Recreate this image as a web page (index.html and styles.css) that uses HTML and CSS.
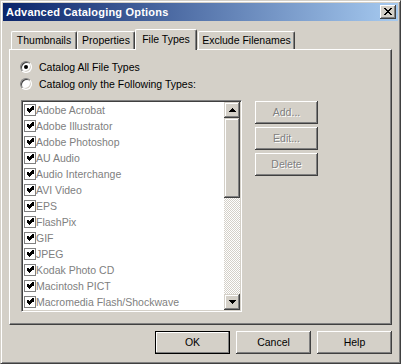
FILE: index.html
```html
<!DOCTYPE html>
<html>
<head>
<meta charset="utf-8">
<title>Advanced Cataloging Options</title>
<link rel="stylesheet" href="styles.css">
</head>
<body>
<div class="window">
  <div class="titlebar">
    <span class="title">Advanced Cataloging Options</span>
    <div class="close">
      <svg width="8" height="7" viewBox="0 0 8 7" shape-rendering="crispEdges">
        <rect x="0" y="0" width="2" height="1"/><rect x="6" y="0" width="2" height="1"/>
        <rect x="1" y="1" width="2" height="1"/><rect x="5" y="1" width="2" height="1"/>
        <rect x="2" y="2" width="4" height="1"/>
        <rect x="3" y="3" width="2" height="1"/>
        <rect x="2" y="4" width="4" height="1"/>
        <rect x="1" y="5" width="2" height="1"/><rect x="5" y="5" width="2" height="1"/>
        <rect x="0" y="6" width="2" height="1"/><rect x="6" y="6" width="2" height="1"/>
      </svg>
    </div>
  </div>
  <div class="body">
    <div class="tabs">
      <div class="tab tab-thumbs">Thumbnails</div>
      <div class="tab tab-props">Properties</div>
      <div class="tab tab-types selected">File Types</div>
      <div class="tab tab-exclude">Exclude Filenames</div>
    </div>
    <div class="panel">
      <div class="radio-row"><span class="radio checked"></span><span class="radio-label">Catalog All File Types</span></div>
      <div class="radio-row"><span class="radio"></span><span class="radio-label">Catalog only the Following Types:</span></div>
      <div class="list-area">
        <div class="listbox">
          <ul class="items">
            <li class="item"><span class="check"></span>Adobe Acrobat</li>
            <li class="item"><span class="check"></span>Adobe Illustrator</li>
            <li class="item"><span class="check"></span>Adobe Photoshop</li>
            <li class="item"><span class="check"></span>AU Audio</li>
            <li class="item"><span class="check"></span>Audio Interchange</li>
            <li class="item"><span class="check"></span>AVI Video</li>
            <li class="item"><span class="check"></span>EPS</li>
            <li class="item"><span class="check"></span>FlashPix</li>
            <li class="item"><span class="check"></span>GIF</li>
            <li class="item"><span class="check"></span>JPEG</li>
            <li class="item"><span class="check"></span>Kodak Photo CD</li>
            <li class="item"><span class="check"></span>Macintosh PICT</li>
            <li class="item"><span class="check"></span>Macromedia Flash/Shockwave</li>
          </ul>
          <div class="scrollbar">
            <div class="sb-btn">
              <svg width="7" height="4" viewBox="0 0 7 4" shape-rendering="crispEdges">
                <rect x="3" y="0" width="1" height="1"/><rect x="2" y="1" width="3" height="1"/>
                <rect x="1" y="2" width="5" height="1"/><rect x="0" y="3" width="7" height="1"/>
              </svg>
            </div>
            <div class="sb-thumb"></div>
            <div class="sb-track"></div>
            <div class="sb-btn">
              <svg width="7" height="4" viewBox="0 0 7 4" shape-rendering="crispEdges">
                <rect x="0" y="0" width="7" height="1"/><rect x="1" y="1" width="5" height="1"/>
                <rect x="2" y="2" width="3" height="1"/><rect x="3" y="3" width="1" height="1"/>
              </svg>
            </div>
          </div>
        </div>
        <div class="side-buttons">
          <div class="btn btn-side disabled">Add...</div>
          <div class="btn btn-side disabled">Edit...</div>
          <div class="btn btn-side disabled">Delete</div>
        </div>
      </div>
    </div>
    <div class="footer">
      <div class="btn btn-main default">OK</div>
      <div class="btn btn-main">Cancel</div>
      <div class="btn btn-main">Help</div>
    </div>
  </div>
</div>
</body>
</html>
```

FILE: styles.css
```css
html, body {
  margin: 0;
  padding: 0;
  background: #d4d0c8;
}
body {
  font-family: "Liberation Sans", Arial, sans-serif;
  font-size: 10.5px;
  color: #000;
}
.window {
  width: 401px;
  height: 364px;
  box-sizing: border-box;
  border: 1px solid;
  border-color: #d4d0c8 #404040 #404040 #d4d0c8;
  box-shadow: inset 1px 1px #fff, inset -1px -1px #808080;
  padding: 2px;
  background: #d4d0c8;
  display: flex;
  flex-direction: column;
}
.titlebar {
  height: 18px;
  flex: none;
  background: linear-gradient(to right, #0a246a, #a6caf0);
  display: flex;
  align-items: center;
  padding: 0 2px 0 3px;
}
.title {
  color: #fff;
  font-weight: bold;
  font-size: 11px;
  letter-spacing: 0.2px;
}
.close {
  margin-left: auto;
  width: 16px;
  height: 14px;
  box-sizing: border-box;
  background: #d4d0c8;
  box-shadow: inset -1px -1px #404040, inset 1px 1px #fff, inset -2px -2px #808080;
  display: flex;
  align-items: center;
  justify-content: center;
  padding: 0 1px 1px 0;
}
.close svg, .sb-btn svg { fill: #000; display: block; }
.body {
  flex: 1;
  padding: 8px 6px 0 6px;
  display: flex;
  flex-direction: column;
}
.tabs {
  display: flex;
  align-items: flex-end;
  height: 20px;
  padding-left: 2px;
  flex: none;
}
.tab {
  height: 18px;
  box-sizing: border-box;
  border-top: 1px solid #fff;
  border-left: 1px solid #fff;
  border-right: 1px solid #404040;
  box-shadow: inset -1px 0 #808080;
  border-radius: 2px 2px 0 0;
  display: flex;
  align-items: center;
  justify-content: center;
  padding-bottom: 1px;
  white-space: nowrap;
}
.tab.selected {
  height: 21px;
  margin-bottom: -1px;
  position: relative;
  z-index: 1;
  background: #d4d0c8;
  padding-bottom: 3px;
}
.tab-thumbs { width: 66px; }
.tab-props { width: 58px; }
.tab-types { width: 62px; }
.tab-exclude { width: 97px; margin-left: 1px; }
.panel {
  height: 276px;
  flex: none;
  box-sizing: border-box;
  border-top: 1px solid #fff;
  border-left: 1px solid #fff;
  border-right: 1px solid #404040;
  border-bottom: 1px solid #404040;
  box-shadow: inset -1px -1px #808080;
  padding: 8px 0 0 10px;
}
.radio-row {
  height: 17px;
  display: flex;
  align-items: center;
}
.radio {
  width: 12px;
  height: 12px;
  box-sizing: border-box;
  border-radius: 50%;
  background: #fff;
  border: 1px solid;
  border-color: #808080 #fff #fff #808080;
  box-shadow: inset 1px 1px #404040, inset -1px -1px #d4d0c8;
  position: relative;
  margin-right: 7px;
  margin-top: 1px;
}
.radio.checked::after {
  content: "";
  position: absolute;
  left: 3px;
  top: 3px;
  width: 4px;
  height: 4px;
  border-radius: 50%;
  background: #000;
}
.list-area {
  display: flex;
  margin-top: 8px;
  margin-left: 1px;
}
.listbox {
  width: 221px;
  height: 212px;
  box-sizing: border-box;
  border: 1px solid;
  border-color: #808080 #fff #fff #808080;
  box-shadow: inset 1px 1px #404040, inset -1px -1px #d4d0c8;
  padding: 1px;
  background: #fff;
  display: flex;
}
.items {
  list-style: none;
  margin: 0;
  padding: 0;
  width: 201px;
  color: #808080;
}
.item {
  height: 16px;
  display: flex;
  align-items: center;
  padding-left: 1px;
  white-space: nowrap;
}
.check {
  width: 12px;
  height: 12px;
  box-sizing: border-box;
  border: 1px solid #808080;
  background: #fff;
  margin-right: 0;
  flex: none;
  position: relative;
}
.check::after {
  content: "";
  position: absolute;
  left: 1px;
  top: 1px;
  width: 1px;
  height: 3px;
  background: #000;
  transform: translate(1px, 2px);
  box-shadow:
    1px 1px #000, 2px 2px #000, 3px 1px #000, 4px 0 #000, 5px -1px #000, 6px -2px #000,
    1px 0 #000, 2px 1px #000, 3px 0 #000, 4px -1px #000, 5px -2px #000, 6px -1px #000;
}
.scrollbar {
  width: 16px;
  display: flex;
  flex-direction: column;
}
.sb-btn, .sb-thumb {
  background: #d4d0c8;
  box-shadow: inset -1px -1px #404040, inset 1px 1px #d4d0c8, inset -2px -2px #808080, inset 2px 2px #fff;
}
.sb-btn {
  height: 16px;
  display: flex;
  align-items: center;
  justify-content: center;
  flex: none;
}
.sb-thumb {
  height: 80px;
  flex: none;
}
.sb-track {
  flex: 1;
  background-image: conic-gradient(#fff 25%, #d4d0c8 0 50%, #fff 0 75%, #d4d0c8 0);
  background-size: 2px 2px;
}
.btn {
  box-sizing: border-box;
  background: #d4d0c8;
  box-shadow: inset -1px -1px #404040, inset 1px 1px #fff, inset -2px -2px #808080, inset 2px 2px #d4d0c8;
  display: flex;
  align-items: center;
  justify-content: center;
  height: 23px;
  padding-bottom: 1px;
}
.btn.disabled {
  color: #808080;
  text-shadow: 1px 1px #fff;
}
.side-buttons {
  display: flex;
  flex-direction: column;
  gap: 3px;
  margin-left: 13px;
  margin-top: 1px;
}
.btn-side { width: 63px; }
.footer {
  display: flex;
  justify-content: flex-end;
  gap: 6px;
  margin-top: 6px;
}
.btn-main { width: 75px; }
.btn.default {
  border: 1px solid #000;
  box-shadow: inset -1px -1px #808080, inset 1px 1px #fff;
}
```
